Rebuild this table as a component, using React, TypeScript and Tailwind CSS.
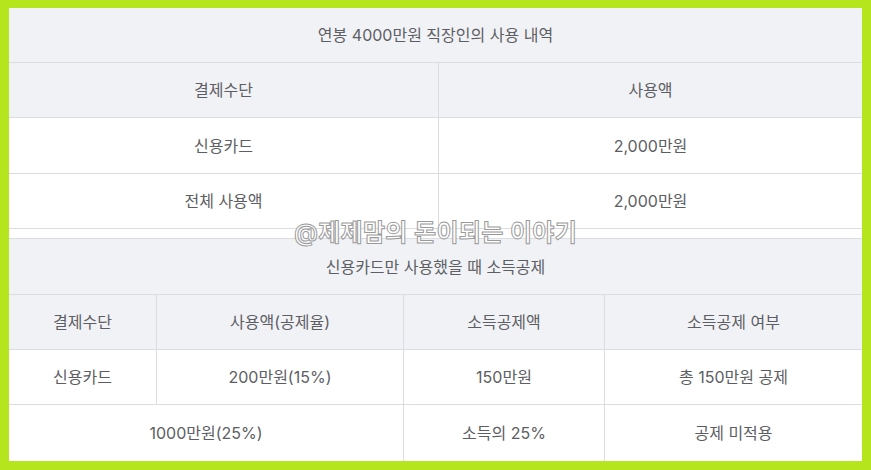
import React from "react";

const font = { fontFamily: 'Inter, "Noto Sans CJK KR", "Noto Sans", sans-serif' };

export default function App() {
  return (
    <div className="w-[871px] h-[470px] bg-[#b5e51d] pt-[8px] pl-[9px] pr-[9px] pb-[9px]" style={font}>
      <div className="relative h-full bg-white text-[16px] text-[#5d5e63] leading-none">
        {/* Table 1 */}
        <div className="border-b border-[#dcdde2]">
          <div className="h-[55px] flex items-center justify-center bg-[#f1f2f6] border-b border-[#dcdde2]">
            연봉 4000만원 직장인의 사용 내역
          </div>
          <div className="grid grid-cols-[430px_1fr] h-[55px] bg-[#f1f2f6] border-b border-[#dcdde2]">
            <div className="flex items-center justify-center border-r border-[#dcdde2]">결제수단</div>
            <div className="flex items-center justify-center">사용액</div>
          </div>
          <div className="grid grid-cols-[430px_1fr] h-[56px] border-b border-[#dcdde2]">
            <div className="flex items-center justify-center border-r border-[#dcdde2]">신용카드</div>
            <div className="flex items-center justify-center">2,000만원</div>
          </div>
          <div className="grid grid-cols-[430px_1fr] h-[54px]">
            <div className="flex items-center justify-center border-r border-[#dcdde2]">전체 사용액</div>
            <div className="flex items-center justify-center">2,000만원</div>
          </div>
        </div>

        {/* Table 2 */}
        <div className="mt-[9px] border-t border-[#dcdde2]">
          <div className="h-[56px] flex items-center justify-center bg-[#f1f2f6] border-b border-[#dcdde2]">
            신용카드만 사용했을 때 소득공제
          </div>
          <div className="grid grid-cols-[148px_247px_201px_1fr] h-[55px] bg-[#f1f2f6] border-b border-[#dcdde2]">
            <div className="flex items-center justify-center border-r border-[#dcdde2]">결제수단</div>
            <div className="flex items-center justify-center border-r border-[#dcdde2]">사용액(공제율)</div>
            <div className="flex items-center justify-center border-r border-[#dcdde2]">소득공제액</div>
            <div className="flex items-center justify-center">소득공제 여부</div>
          </div>
          <div className="grid grid-cols-[148px_247px_201px_1fr] h-[55px] border-b border-[#dcdde2]">
            <div className="flex items-center justify-center border-r border-[#dcdde2]">신용카드</div>
            <div className="flex items-center justify-center border-r border-[#dcdde2]">200만원(15%)</div>
            <div className="flex items-center justify-center border-r border-[#dcdde2]">150만원</div>
            <div className="flex items-center justify-center">총 150만원 공제</div>
          </div>
          <div className="grid grid-cols-[395px_201px_1fr] h-[56px]">
            <div className="flex items-center justify-center border-r border-[#dcdde2]">1000만원(25%)</div>
            <div className="flex items-center justify-center border-r border-[#dcdde2]">소득의 25%</div>
            <div className="flex items-center justify-center">공제 미적용</div>
          </div>
        </div>

        {/* Watermark */}
        <div className="absolute left-0 right-0 top-[213px] flex justify-center pointer-events-none">
          <span className="text-[24px] font-semibold text-white tracking-[0.3px] [-webkit-text-stroke:1px_#9a9a9a]">
            @제제맘의 돈이되는 이야기
          </span>
        </div>
      </div>
    </div>
  );
}
